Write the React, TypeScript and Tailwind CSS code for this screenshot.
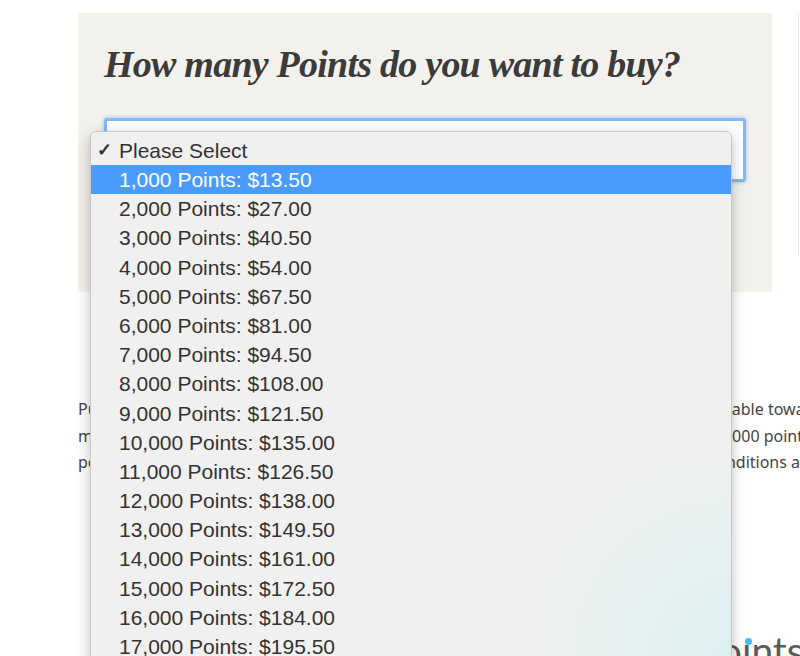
const OPTIONS = [
  "1,000 Points: $13.50",
  "2,000 Points: $27.00",
  "3,000 Points: $40.50",
  "4,000 Points: $54.00",
  "5,000 Points: $67.50",
  "6,000 Points: $81.00",
  "7,000 Points: $94.50",
  "8,000 Points: $108.00",
  "9,000 Points: $121.50",
  "10,000 Points: $135.00",
  "11,000 Points: $126.50",
  "12,000 Points: $138.00",
  "13,000 Points: $149.50",
  "14,000 Points: $161.00",
  "15,000 Points: $172.50",
  "16,000 Points: $184.00",
  "17,000 Points: $195.50",
  "18,000 Points: $207.00",
];

function DropdownMenu() {
  return (
    <div className="absolute left-[90px] top-[131px] w-[642px] h-[560px] rounded-t-[6px] border border-[#c8c8c8] bg-[radial-gradient(220px_circle_at_100%_525px,#dcf0f1,#f0f0f0)] shadow-[0_4px_14px_rgba(0,0,0,0.25)] pt-[4px] overflow-hidden font-['Liberation_Sans',sans-serif] text-[21px] text-[#333]">
      <div className="h-[29.2px] flex items-center">
        <span className="w-[28px] pl-[6px] text-[18px] font-bold text-[#333]">✓</span>
        <span>Please Select</span>
      </div>
      {OPTIONS.map((opt, i) => (
        <div
          key={opt}
          className={
            i === 0
              ? "h-[29.2px] flex items-center bg-[#4a9bfc] text-white pl-[28px]"
              : "h-[29.2px] flex items-center pl-[28px]"
          }
        >
          {opt}
        </div>
      ))}
    </div>
  );
}

export default function App() {
  return (
    <div className="relative w-[800px] h-[656px] overflow-hidden bg-white">
      <div className="relative flex">
        <div className="ml-[78px] mt-[13px] w-[694px] shrink-0">
          <div className="bg-[#f3f1ec] h-[279px] px-[26px] pt-[30px]">
            <h1 className="font-['Liberation_Serif',serif] font-bold italic text-[38px] leading-[42px] tracking-[-0.02em] text-[#3b3b3b] whitespace-nowrap">
              How many Points do you want to buy?
            </h1>
            <div className="mt-[33px] h-[64px] rounded-[3px] border-[3px] border-[#86b6f3] bg-white shadow-[0_0_4px_rgba(74,155,252,0.6)]" />
          </div>

          <div className="mt-[104px] font-['Noto_Sans',sans-serif] text-[16px] leading-[26.5px] text-[#444] whitespace-nowrap">
            <p>Purchased Points are credited to your Points account immediately and are fully redeemable towards</p>
            <p>member Rewards. A minimum purchase of 1,000 Points, and maximum Purchase of 10,000 points</p>
            <p>points every calendar year. All purchased Points are Non-refundable. Full Terms and conditions apply.</p>
          </div>
        </div>
        <div className="ml-[26px] mt-[13px] h-[242px] border-l border-[#e6e6e6]" />
      </div>

      {/* logo */}
      <div className="absolute left-[698px] top-[626px] font-['Lato',sans-serif] text-[39px] leading-[48px] text-[#5a5a5a] whitespace-nowrap">
        <span>po</span>
        <span className="relative">
          ı
          <span className="absolute left-[3px] top-[11px] w-[7px] h-[7px] rounded-full bg-[#3fc1f2]" />
        </span>
        <span>nts</span>
      </div>

      <DropdownMenu />
    </div>
  );
}
